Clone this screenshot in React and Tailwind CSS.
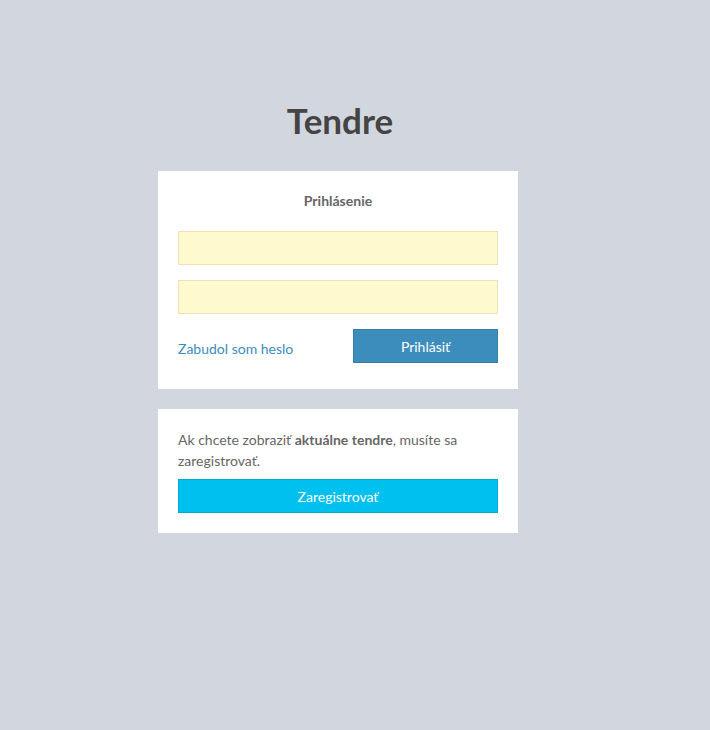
import React from "react";

const App = () => {
  return (
    <div
      className="min-h-[730px] bg-[#d2d6de] text-[#666] text-[14px] pr-[34px]"
      style={{ fontFamily: '"Source Sans Pro", Lato, "Noto Sans", sans-serif' }}
    >
      <div className="mx-auto w-[360px] pt-[96px]">
        <h1 className="text-center text-[35px] font-bold leading-[48px] text-[#444] mb-[27px] translate-x-[2px]">
          Tendre
        </h1>

        {/* login box */}
        <div className="bg-white px-5 pt-5 pb-[26px]">
          <p className="text-center font-bold leading-5 mb-5">Prihlásenie</p>
          <form className="flex flex-col gap-[15px]">
            <input
              type="text"
              className="h-[34px] w-full border border-[#f3dfb4] bg-[#fffacd] px-3 outline-none"
            />
            <input
              type="password"
              className="h-[34px] w-full border border-[#f3dfb4] bg-[#fffacd] px-3 outline-none"
            />
            <div className="flex items-center justify-between">
              <a href="#" className="text-[#3c8dbc] leading-5 translate-y-[3px]">
                Zabudol som heslo
              </a>
              <button
                type="button"
                className="h-[34px] w-[145px] border border-[#367fa9] bg-[#3c8dbc] text-white"
              >
                Prihlásiť
              </button>
            </div>
          </form>
        </div>

        {/* register box */}
        <div className="mt-5 bg-white p-5">
          <p className="leading-[21px] mb-2">
            Ak chcete zobraziť <b>aktuálne tendre</b>, musíte sa zaregistrovať.
          </p>
          <button
            type="button"
            className="h-[34px] w-full border border-[#00acd6] bg-[#00c0ef] text-white"
          >
            Zaregistrovať
          </button>
        </div>
      </div>
    </div>
  );
};

export default App;
